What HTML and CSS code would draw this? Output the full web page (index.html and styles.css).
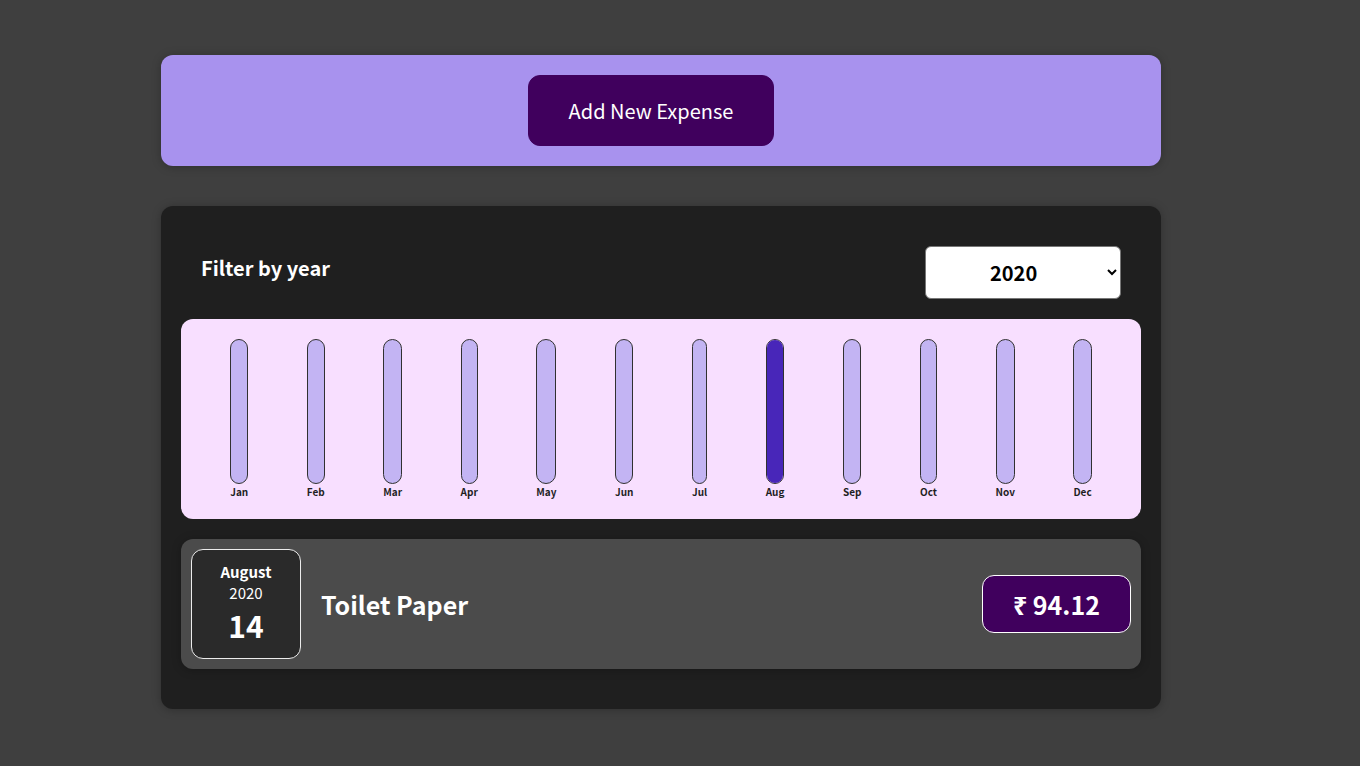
FILE: index.html
```html
<!DOCTYPE html>
<html lang="en">
<head>
<meta charset="utf-8">
<title>Expenses</title>
<link rel="stylesheet" href="styles.css">
</head>
<body>
  <div class="new-expense">
    <button class="new-expense__btn">Add New Expense</button>
  </div>
  <div class="expenses card">
    <div class="expenses-filter">
      <div class="expenses-filter__control">
        <label>Filter by year</label>
        <select>
          <option>2022</option>
          <option>2021</option>
          <option selected>2020</option>
          <option>2019</option>
        </select>
      </div>
    </div>
    <div class="chart">
      <div class="chart-bar"><div class="chart-bar__inner"><div class="chart-bar__fill" style="height:0%"></div></div><div class="chart-bar__label">Jan</div></div>
      <div class="chart-bar"><div class="chart-bar__inner"><div class="chart-bar__fill" style="height:0%"></div></div><div class="chart-bar__label">Feb</div></div>
      <div class="chart-bar"><div class="chart-bar__inner"><div class="chart-bar__fill" style="height:0%"></div></div><div class="chart-bar__label">Mar</div></div>
      <div class="chart-bar"><div class="chart-bar__inner"><div class="chart-bar__fill" style="height:0%"></div></div><div class="chart-bar__label">Apr</div></div>
      <div class="chart-bar"><div class="chart-bar__inner"><div class="chart-bar__fill" style="height:0%"></div></div><div class="chart-bar__label">May</div></div>
      <div class="chart-bar"><div class="chart-bar__inner"><div class="chart-bar__fill" style="height:0%"></div></div><div class="chart-bar__label">Jun</div></div>
      <div class="chart-bar"><div class="chart-bar__inner"><div class="chart-bar__fill" style="height:0%"></div></div><div class="chart-bar__label">Jul</div></div>
      <div class="chart-bar"><div class="chart-bar__inner"><div class="chart-bar__fill" style="height:100%"></div></div><div class="chart-bar__label">Aug</div></div>
      <div class="chart-bar"><div class="chart-bar__inner"><div class="chart-bar__fill" style="height:0%"></div></div><div class="chart-bar__label">Sep</div></div>
      <div class="chart-bar"><div class="chart-bar__inner"><div class="chart-bar__fill" style="height:0%"></div></div><div class="chart-bar__label">Oct</div></div>
      <div class="chart-bar"><div class="chart-bar__inner"><div class="chart-bar__fill" style="height:0%"></div></div><div class="chart-bar__label">Nov</div></div>
      <div class="chart-bar"><div class="chart-bar__inner"><div class="chart-bar__fill" style="height:0%"></div></div><div class="chart-bar__label">Dec</div></div>
    </div>
    <ul class="expenses-list">
      <li class="expense-item card">
        <div class="expense-date">
          <div class="expense-date__month">August</div>
          <div class="expense-date__year">2020</div>
          <div class="expense-date__day">14</div>
        </div>
        <div class="expense-item__description">
          <h2>Toilet Paper</h2>
          <div class="expense-item__price">₹ 94.12</div>
        </div>
      </li>
    </ul>
  </div>
</body>
</html>
```

FILE: styles.css
```css
* {
  box-sizing: border-box;
}

html {
  font-size: 20px;
}

body {
  margin: 0;
  padding: 15px 38px 0 0;
  background-color: #3f3f3f;
  font-family: "Noto Sans CJK JP", "Noto Sans", sans-serif;
}

.card {
  border-radius: 12px;
  box-shadow: 0 1px 10px rgba(0, 0, 0, 0.25);
}

.new-expense {
  background-color: #a892ee;
  padding: 1rem;
  margin: 2rem auto;
  width: 50rem;
  max-width: 95%;
  border-radius: 12px;
  text-align: center;
  box-shadow: 0 1px 10px rgba(0, 0, 0, 0.25);
}

.new-expense__btn {
  font: inherit;
  cursor: pointer;
  padding: 1rem 2rem;
  border: 1px solid #40005d;
  background-color: #40005d;
  color: white;
  border-radius: 12px;
  margin-right: 1rem;
}

.expenses {
  padding: 1rem;
  background-color: rgb(31, 31, 31);
  margin: 2rem auto;
  width: 50rem;
  max-width: 95%;
}

.expenses-filter {
  color: white;
  padding: 0 1rem;
}

.expenses-filter__control {
  display: flex;
  width: 100%;
  align-items: center;
  justify-content: space-between;
  margin: 1rem 0;
}

.expenses-filter label {
  font-weight: bold;
  margin-bottom: 0.5rem;
}

.expenses-filter select {
  font: inherit;
  width: 196px;
  padding: 0.5rem 3rem;
  font-weight: bold;
  border-radius: 6px;
  background-color: white;
  color: black;
  border: 1px solid #767676;
}

.chart {
  padding: 1rem;
  border-radius: 12px;
  background-color: #f8dfff;
  text-align: center;
  display: flex;
  justify-content: space-around;
  height: 10rem;
}

.chart-bar {
  height: 100%;
  display: flex;
  flex-direction: column;
  align-items: center;
}

.chart-bar__inner {
  height: 100%;
  width: 100%;
  border: 1px solid #313131;
  border-radius: 12px;
  background-color: #c3b4f3;
  overflow: hidden;
  display: flex;
  flex-direction: column;
  justify-content: flex-end;
}

.chart-bar__fill {
  background-color: #4826b9;
  width: 100%;
}

.chart-bar__label {
  font-weight: bold;
  font-size: 0.5rem;
  text-align: center;
  color: #1f1f1f;
}

.expenses-list {
  list-style: none;
  padding: 0;
  margin: 0;
}

.expense-item {
  display: flex;
  justify-content: space-between;
  align-items: center;
  padding: 0.5rem;
  margin: 1rem 0;
  background-color: #4b4b4b;
}

.expense-item__description {
  display: flex;
  flex-direction: row;
  align-items: center;
  justify-content: flex-start;
  flex: 1;
}

.expense-item h2 {
  font-size: 1.25rem;
  flex: 1;
  margin: 0 1rem;
  color: white;
}

.expense-item__price {
  font-size: 1.25rem;
  font-weight: bold;
  color: white;
  background-color: #40005d;
  border: 1px solid white;
  padding: 0.5rem 1.5rem;
  border-radius: 12px;
}

.expense-date {
  display: flex;
  flex-direction: column;
  width: 5.5rem;
  height: 5.5rem;
  border: 1px solid #ececec;
  background-color: #2a2a2a;
  color: white;
  border-radius: 12px;
  align-items: center;
  justify-content: center;
}

.expense-date__month {
  font-size: 0.75rem;
  font-weight: bold;
}

.expense-date__year {
  font-size: 0.75rem;
}

.expense-date__day {
  font-size: 1.5rem;
  font-weight: bold;
}
```
